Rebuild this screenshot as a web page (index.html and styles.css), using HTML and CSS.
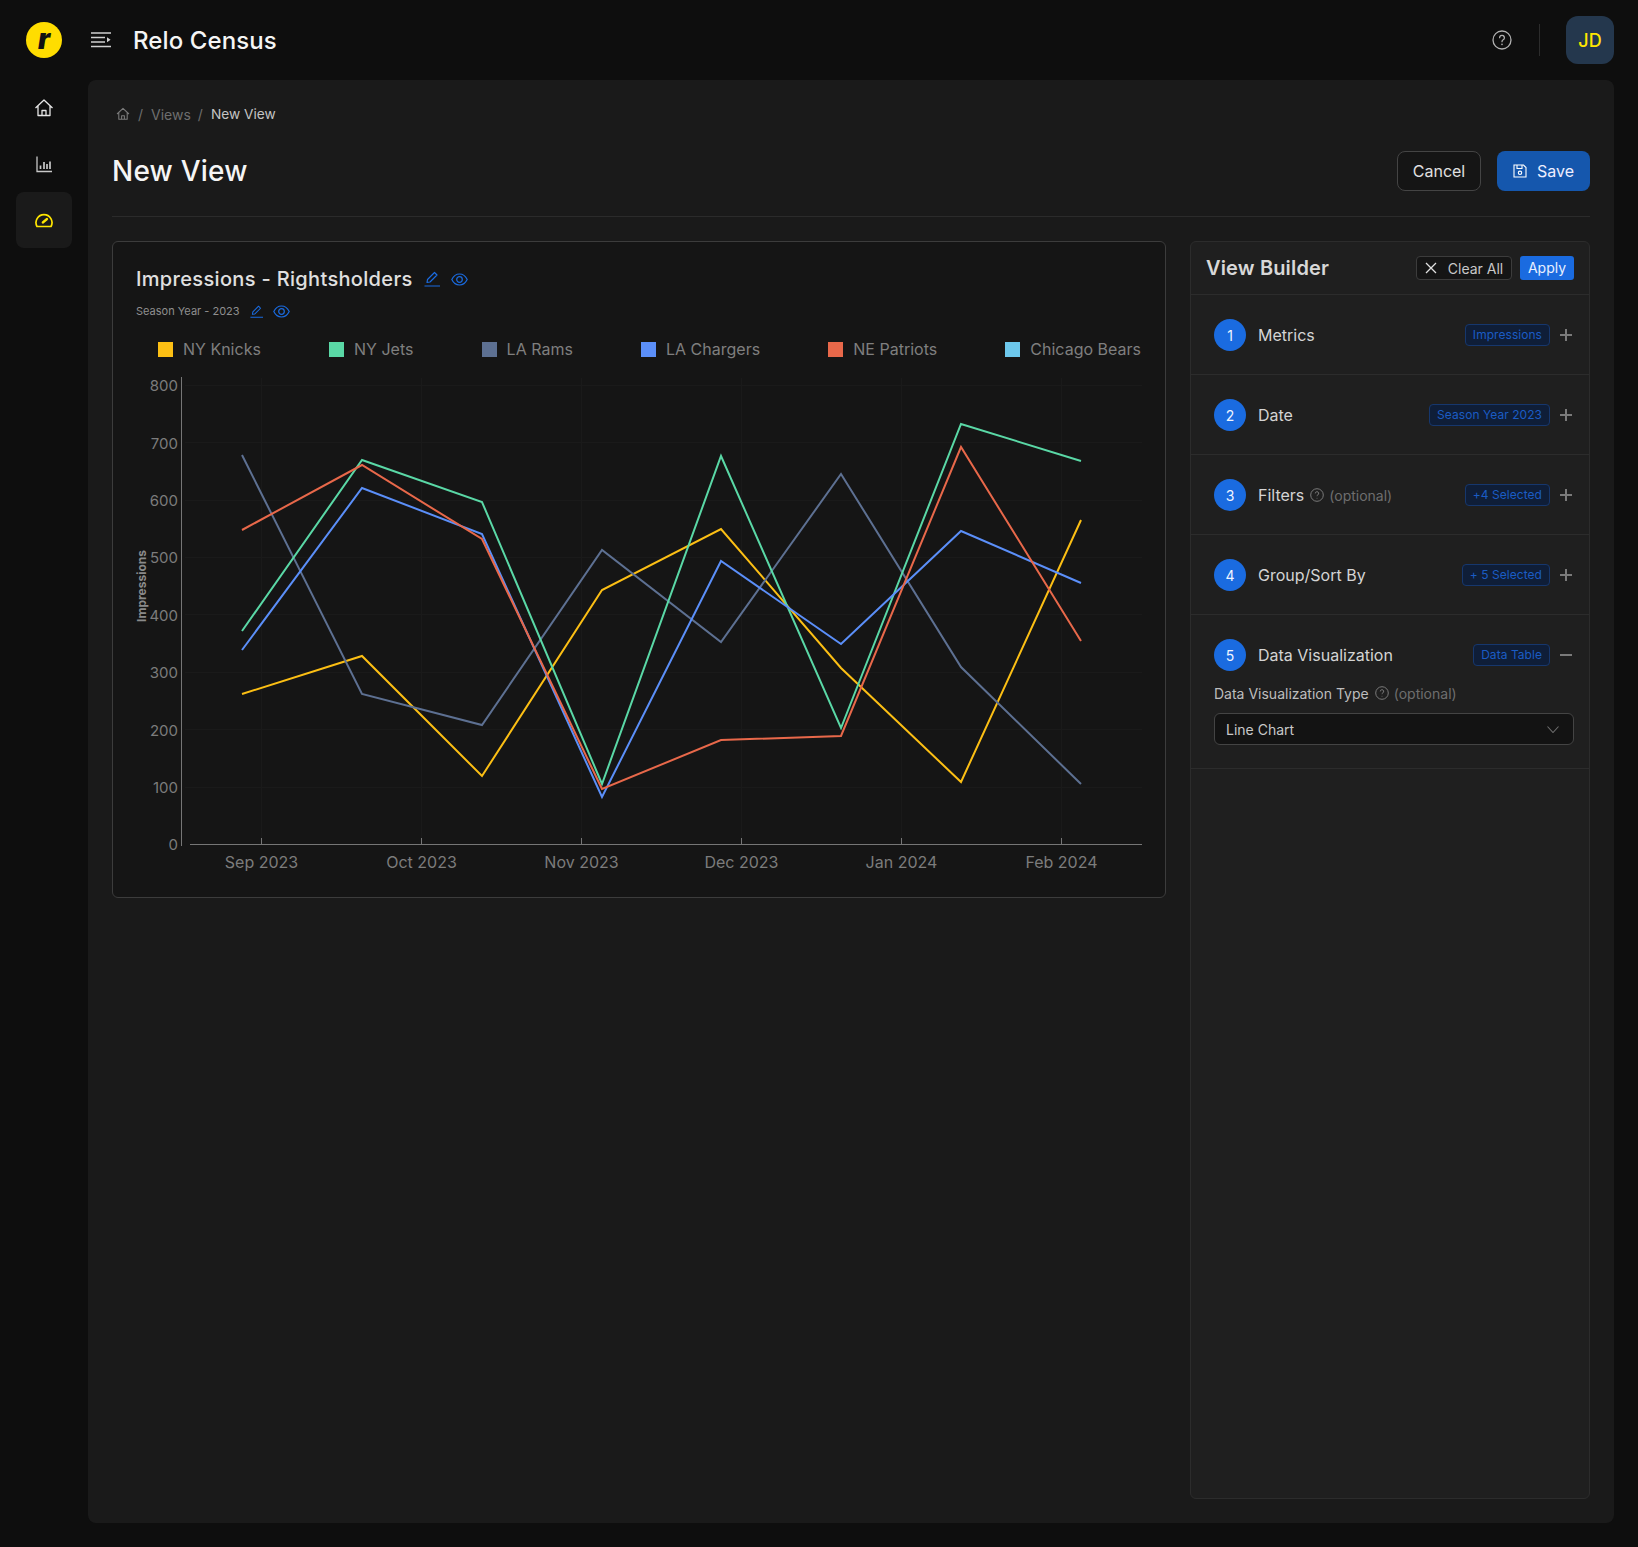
FILE: index.html
```html
<!DOCTYPE html>
<html lang="en">

<head>
  <meta charset="UTF-8" />
  <title>Relo Census – New View</title>
  <link rel="stylesheet" href="styles.css">
</head>

<body>
  <div class="app">

    <header class="topbar">
      <div class="logo-cell"><div class="logo">r</div></div>
      <svg class="menu-icon" width="20" height="16" viewBox="0 0 20 16" fill="none" stroke="#d0d0d0" stroke-width="1.5">
        <path d="M0 1h20M0 5.500h14M0 10h14M0 14.500h20" />
        <path d="M16 5.200l3.600 2.500-3.600 2.500z" fill="#d0d0d0" stroke="none" />
      </svg>
      <div class="app-name">Relo Census</div>
      <div class="topbar-right">
        <svg width="20" height="20" viewBox="0 0 20 20" fill="none" stroke="#b0b0b0" stroke-width="1.3" stroke-linecap="round">
          <circle cx="10" cy="10" r="9" />
          <path d="M7.600 7.700a2.400 2.400 0 1 1 3.600 2.100c-.8.500-1.200 1-1.200 1.900" />
          <path d="M10 14.400v.1" stroke-width="1.6" />
        </svg>
        <div class="topbar-sep"></div>
        <div class="avatar">JD</div>
      </div>
    </header>

    <aside class="sidebar">
      <div class="side-item">
        <svg width="20" height="20" viewBox="0 0 20 20" fill="none" stroke="#e6e6e6" stroke-width="1.3" stroke-linejoin="round">
          <path d="M1.500 10L10 2l8.500 8M4 8v9.500h12V8M8 17.500v-5h4v5" />
        </svg>
      </div>
      <div class="side-item">
        <svg width="20" height="20" viewBox="0 0 20 20" fill="none" stroke="#c8c8c8" stroke-width="1.3">
          <path d="M3 2.500V17.500H18" />
          <path d="M6.500 15v-3.500M10 15V8M13 15v-5M16 15V7.500" stroke-width="1.7" />
        </svg>
      </div>
      <div class="side-item active">
        <svg width="20" height="18" viewBox="0 0 20 18" fill="none" stroke="#ffe600" stroke-width="1.7" stroke-linecap="round" stroke-linejoin="round">
          <path d="M3 15.500A8 8 0 1 1 17 15.500z" />
          <path d="M8.800 11.500l4.200-3.500" stroke-width="2.300" />
        </svg>
      </div>
    </aside>

    <main class="main">
      <div class="breadcrumb">
        <svg width="14" height="14" viewBox="0 0 20 20" fill="none" stroke="#7a7a7a" stroke-width="1.5" stroke-linejoin="round">
          <path d="M1.500 10L10 2l8.500 8M4 8v9.500h12V8M8 17.500v-5h4v5" />
        </svg>
        <span class="crumb-sep">/</span>
        <span class="crumb-link">Views</span>
        <span class="crumb-sep">/</span>
        <span class="crumb-current">New View</span>
      </div>

      <div class="page-head">
        <h1>New View</h1>
        <div class="page-actions">
          <button class="btn btn-cancel">Cancel</button>
          <button class="btn btn-save">
            <svg width="14" height="14" viewBox="0 0 14 14" fill="none" stroke="#fff" stroke-width="1.1">
              <path d="M1 1h9.500L13 3.500V13H1z" />
              <path d="M4 1v3.500h5V1" />
              <circle cx="7" cy="8.800" r="1.700" />
            </svg>
            Save
          </button>
        </div>
      </div>

      <div class="content">
        <section class="chart-card">
          <div class="chart-title">
            <span>Impressions - Rightsholders</span>
            <svg class="pen" width="16" height="16" viewBox="0 0 16 16" fill="none" stroke="#1a6be0" stroke-width="1.2" stroke-linejoin="round">
              <path d="M3 11.500l.5-3L10.500 1.500l2.500 2.500-7 7zM0.500 15h15.500" />
            </svg>
            <svg width="17" height="13" viewBox="0 0 17 13" fill="none" stroke="#1a6be0" stroke-width="1.2">
              <path d="M.8 6.500C2.500 3 5 1 8.500 1s6 2 7.700 5.500C14.500 10 12 12 8.500 12S2.500 10 .8 6.500z" />
              <circle cx="8.500" cy="6.500" r="2.800" />
            </svg>
          </div>
          <div class="chart-sub">
            <span>Season Year - 2023</span>
            <svg width="13" height="13" viewBox="0 0 16 16" fill="none" stroke="#1a6be0" stroke-width="1.3" stroke-linejoin="round">
              <path d="M3 11.500l.5-3L10.500 1.500l2.500 2.500-7 7zM0.500 15h15.500" />
            </svg>
            <svg width="17" height="13" viewBox="0 0 17 13" fill="none" stroke="#1a6be0" stroke-width="1.2">
              <path d="M.8 6.500C2.500 3 5 1 8.500 1s6 2 7.700 5.500C14.500 10 12 12 8.500 12S2.500 10 .8 6.500z" />
              <circle cx="8.500" cy="6.500" r="2.800" />
            </svg>
          </div>

          <div class="legend">
            <div class="legend-item"><i class="swatch sw-knicks"></i>NY Knicks</div>
            <div class="legend-item"><i class="swatch sw-jets"></i>NY Jets</div>
            <div class="legend-item"><i class="swatch sw-rams"></i>LA Rams</div>
            <div class="legend-item"><i class="swatch sw-chargers"></i>LA Chargers</div>
            <div class="legend-item"><i class="swatch sw-patriots"></i>NE Patriots</div>
            <div class="legend-item"><i class="swatch sw-bears"></i>Chicago Bears</div>
          </div>

          <svg class="chart" width="1052" height="520" viewBox="113 372 1052 520">
            <g class="grid">
              <path d="M185 385.500H1142M185 442.500H1142M185 500.500H1142M185 557.500H1142M185 614.500H1142M185 672.500H1142M185 729.500H1142M185 787.500H1142" />
              <path d="M261.500 378V844M421.500 378V844M581.500 378V844M741.500 378V844M901.500 378V844M1061.500 378V844" />
            </g>
            <path class="axis" d="M181.500 377V846M190 844.500H1142" />
            <path class="axis" d="M261.500 838V844M421.500 838V844M581.500 838V844M741.500 838V844M901.500 838V844M1061.500 838V844" />

            <g class="y-labels">
              <text x="178" y="391">800</text>
              <text x="178" y="449">700</text>
              <text x="178" y="506">600</text>
              <text x="178" y="563">500</text>
              <text x="178" y="621">400</text>
              <text x="178" y="678">300</text>
              <text x="178" y="736">200</text>
              <text x="178" y="793">100</text>
              <text x="178" y="850">0</text>
            </g>
            <text class="y-title" transform="translate(146 586) rotate(-90)">Impressions</text>
            <g class="x-labels">
              <text x="261.500" y="868">Sep 2023</text>
              <text x="421.500" y="868">Oct 2023</text>
              <text x="581.500" y="868">Nov 2023</text>
              <text x="741.500" y="868">Dec 2023</text>
              <text x="901.500" y="868">Jan 2024</text>
              <text x="1061.500" y="868">Feb 2024</text>
            </g>

            <polyline class="line ln-knicks" points="242,694 362,656 482,776 602,590 721,529 841,668 961,782 1081,520" />
            <polyline class="line ln-rams" points="242,455 362,694 482,725 602,550 721,642 841,474 961,667 1081,784" />
            <polyline class="line ln-jets" points="242,631 362,460 482,502 602,784 721,456 841,728 961,424 1081,461" />
            <polyline class="line ln-chargers" points="242,650 362,488 482,534 602,797 721,561 841,644 961,531 1081,583" />
            <polyline class="line ln-patriots" points="242,530 362,465 482,539 602,789 721,740 841,736 961,447 1081,641" />
          </svg>
        </section>

        <aside class="builder">
          <div class="builder-head">
            <h2>View Builder</h2>
            <button class="btn-clear">
              <svg width="12" height="12" viewBox="0 0 12 12" fill="none" stroke="#e0e0e0" stroke-width="1.3"><path d="M1 1l10 10M11 1L1 11" /></svg>
              Clear All
            </button>
            <button class="btn-apply">Apply</button>
          </div>

          <div class="step">
            <div class="step-line">
              <span class="step-num">1</span>
              <span class="step-name">Metrics</span>
              <span class="tag">Impressions</span>
              <span class="toggle toggle-plus"></span>
            </div>
          </div>
          <div class="step">
            <div class="step-line">
              <span class="step-num">2</span>
              <span class="step-name">Date</span>
              <span class="tag">Season Year 2023</span>
              <span class="toggle toggle-plus"></span>
            </div>
          </div>
          <div class="step">
            <div class="step-line">
              <span class="step-num">3</span>
              <span class="step-name">Filters</span>
              <svg class="hint" width="14" height="14" viewBox="0 0 14 14" fill="none" stroke="#7a7a7a" stroke-width="1">
                <circle cx="7" cy="7" r="6.300" />
                <path d="M5.300 5.400a1.700 1.700 0 1 1 2.500 1.500c-.5.300-.8.700-.8 1.300M7 9.900v.6" />
              </svg>
              <span class="optional">(optional)</span>
              <span class="tag">+4 Selected</span>
              <span class="toggle toggle-plus"></span>
            </div>
          </div>
          <div class="step">
            <div class="step-line">
              <span class="step-num">4</span>
              <span class="step-name">Group/Sort By</span>
              <span class="tag">+ 5 Selected</span>
              <span class="toggle toggle-plus"></span>
            </div>
          </div>
          <div class="step step-open">
            <div class="step-line">
              <span class="step-num">5</span>
              <span class="step-name">Data Visualization</span>
              <span class="tag">Data Table</span>
              <span class="toggle"></span>
            </div>
            <div class="field-label">
              <span>Data Visualization Type</span>
              <svg class="hint" width="14" height="14" viewBox="0 0 14 14" fill="none" stroke="#7a7a7a" stroke-width="1">
                <circle cx="7" cy="7" r="6.300" />
                <path d="M5.300 5.400a1.700 1.700 0 1 1 2.500 1.500c-.5.300-.8.700-.8 1.300M7 9.900v.6" />
              </svg>
              <span class="optional">(optional)</span>
            </div>
            <div class="select">
              <span>Line Chart</span>
              <svg width="12" height="7" viewBox="0 0 12 7" fill="none" stroke="#6e6e6e" stroke-width="1.1"><path d="M.5.500L6 6.500 11.500.5" /></svg>
            </div>
          </div>
        </aside>
      </div>
    </main>

  </div>
</body>

</html>
```
FILE: styles.css
```css
* {
  box-sizing: border-box;
}

body {
  margin: 0;
  background: #0e0e0e;
  color: #e6e6e6;
  font-family: Inter, "Liberation Sans", sans-serif;
}

.app {
  display: grid;
  grid-template-columns: 88px 1fr;
  grid-template-rows: 80px 1fr;
  height: 100vh;
  padding: 0 24px 24px 0;
}

/* top bar */
.topbar {
  grid-column: 1 / 3;
  display: flex;
  align-items: center;
}

.logo-cell {
  width: 88px;
  display: flex;
  justify-content: center;
}

.logo {
  width: 36px;
  height: 36px;
  border-radius: 50%;
  background: #ffdd00;
  color: #111;
  font-size: 28px;
  font-weight: 900;
  font-style: italic;
  line-height: 34px;
  text-align: center;
}

.menu-icon {
  margin-left: 3px;
}

.app-name {
  margin-left: 22px;
  font-size: 24px;
  font-weight: 500;
  letter-spacing: 0.1px;
  color: #f5f5f5;
}

.topbar-right {
  margin-left: auto;
  display: flex;
  align-items: center;
}

.topbar-sep {
  width: 1px;
  height: 32px;
  margin: 0 26px 0 27px;
  background: #2c2c2c;
}

.avatar {
  width: 48px;
  height: 48px;
  border-radius: 12px;
  background: #24374d;
  color: #ffe600;
  font-size: 18px;
  font-weight: 500;
  display: flex;
  align-items: center;
  justify-content: center;
}

/* side nav */
.sidebar {
  display: flex;
  flex-direction: column;
  align-items: center;
}

.side-item {
  width: 56px;
  height: 56px;
  border-radius: 8px;
  display: flex;
  align-items: center;
  justify-content: center;
}

.side-item.active {
  background: #1a1a1a;
}

/* main panel */
.main {
  display: flex;
  flex-direction: column;
  min-height: 0;
  padding: 24px 24px 24px;
  background: #1a1a1a;
  border-radius: 8px;
}

.breadcrumb {
  display: flex;
  align-items: center;
  height: 20px;
  padding-left: 4px;
  font-size: 14px;
  color: #6e6e6e;
}

.crumb-sep {
  margin: 0 8px 0 8px;
}

.crumb-link {
  margin-right: -1px;
}

.crumb-current {
  font-size: 13.700px;
  color: #c4c4c4;
}

.page-head {
  display: flex;
  align-items: center;
  justify-content: space-between;
  margin-top: 27px;
  padding-bottom: 25px;
  border-bottom: 1px solid #2b2b2b;
}

h1 {
  margin: 0;
  font-size: 28px;
  font-weight: 500;
  letter-spacing: 0.2px;
  color: #f5f5f5;
}

.page-actions {
  display: flex;
  gap: 16px;
}

.btn {
  height: 40px;
  border-radius: 8px;
  font-family: inherit;
  font-size: 16px;
  color: #e0e0e0;
}

.btn-cancel {
  width: 84px;
  background: #151515;
  border: 1px solid #444;
}

.btn-save {
  width: 93px;
  display: flex;
  align-items: center;
  justify-content: center;
  gap: 10px;
  background: #1557ad;
  border: none;
  color: #eef;
}

.content {
  flex: 1;
  display: flex;
  align-items: flex-start;
  gap: 24px;
  margin-top: 24px;
  min-height: 0;
}

/* chart card */
.chart-card {
  width: 1054px;
  height: 657px;
  padding: 23px 0 0;
  background: #151515;
  border: 1px solid #3c3c3c;
  border-radius: 6px;
}

.chart-title {
  display: flex;
  align-items: center;
  gap: 11px;
  padding-left: 23px;
  font-size: 20px;
  font-weight: 500;
  letter-spacing: 0.33px;
  line-height: 28px;
  color: #e0e0e0;
}

.chart-sub {
  display: flex;
  align-items: center;
  gap: 10px;
  margin-top: 10px;
  padding-left: 23px;
  font-size: 11px;
  line-height: 16px;
  color: #8f8f8f;
}

.legend {
  display: flex;
  justify-content: space-between;
  margin-top: 20px;
  padding: 0 24px 0 45px;
  font-size: 16px;
  color: #7f7f7f;
}

.legend-item {
  display: flex;
  align-items: center;
  gap: 10px;
  line-height: 20px;
}

.swatch {
  width: 15px;
  height: 15px;
}

.sw-knicks { background: #fcbf14; }
.sw-jets { background: #5ad8a6; }
.sw-rams { background: #5d7092; }
.sw-chargers { background: #5b8ff9; }
.sw-patriots { background: #e8684a; }
.sw-bears { background: #6dc8ec; }

.chart {
  display: block;
  margin-top: 13px;
}

.grid path {
  stroke: #1a1a1a;
  fill: none;
}

.axis {
  stroke: #767676;
  fill: none;
}

.y-labels text {
  text-anchor: end;
  font-size: 15px;
  fill: #7c7c7c;
}

.x-labels text {
  text-anchor: middle;
  font-size: 16px;
  fill: #7c7c7c;
}

.y-title {
  text-anchor: middle;
  font-size: 12px;
  font-weight: 700;
  fill: #8a8a8a;
}

.line {
  fill: none;
  stroke-width: 2;
}

.ln-knicks { stroke: #fcbf14; }
.ln-jets { stroke: #5ad8a6; }
.ln-rams { stroke: #5d7092; }
.ln-chargers { stroke: #5b8ff9; }
.ln-patriots { stroke: #e8684a; }

/* view builder */
.builder {
  width: 400px;
  align-self: stretch;
  background: #1f1f1f;
  border: 1px solid #2c2c2c;
  border-radius: 6px;
}

.builder-head {
  display: flex;
  align-items: center;
  height: 53px;
  padding: 0 15px;
  border-bottom: 1px solid #2c2c2c;
}

h2 {
  margin: 0 auto 0 0;
  font-size: 20px;
  font-weight: 600;
  letter-spacing: 0.15px;
  color: #d8d8d8;
}

.btn-clear {
  width: 96px;
  height: 24px;
  display: flex;
  align-items: center;
  justify-content: center;
  gap: 11px;
  padding-bottom: 1px;
  background: #151515;
  border: 1px solid #3c3c3c;
  border-radius: 4px;
  font-family: inherit;
  font-size: 14px;
  color: #c8c8c8;
}

.btn-apply {
  width: 54px;
  height: 24px;
  margin-left: 8px;
  padding: 0 0 1px;
  background: #1a6be0;
  border: none;
  border-radius: 3px;
  font-family: inherit;
  font-size: 14px;
  color: #e8f0ff;
}

.step {
  height: 80px;
  padding: 24px 15px 0 23px;
  border-bottom: 1px solid #2c2c2c;
}

.step-open {
  height: 154px;
}

.step-line {
  display: flex;
  align-items: center;
  height: 32px;
}

.step-num {
  width: 32px;
  height: 32px;
  border-radius: 50%;
  background: #1a6be0;
  color: #f0f5ff;
  font-size: 14px;
  display: flex;
  align-items: center;
  justify-content: center;
}

.step-name {
  margin-left: 12px;
  font-size: 16px;
  color: #d4d4d4;
}

.hint {
  margin: 0 5px 0 6px;
}

.optional {
  font-size: 14px;
  color: #6e6e6e;
}

.tag {
  margin-left: auto;
  height: 22px;
  padding: 0 7px;
  line-height: 19px;
  background: #0f1e38;
  border: 1px solid #16376d;
  border-radius: 4px;
  font-size: 12px;
  letter-spacing: 0.05px;
  color: #1b5cc4;
}

.toggle {
  position: relative;
  width: 12px;
  height: 12px;
  margin: 0 2px 0 10px;
}

.toggle::before {
  content: "";
  position: absolute;
  top: 5px;
  left: 0;
  width: 12px;
  height: 2px;
  background: #7a7a7a;
}

.toggle-plus::after {
  content: "";
  position: absolute;
  top: 0;
  left: 5px;
  width: 2px;
  height: 12px;
  background: #7a7a7a;
}

.field-label {
  display: flex;
  align-items: center;
  margin-top: 12px;
  height: 20px;
  font-size: 14px;
  color: #bdbdbd;
}

.select {
  display: flex;
  align-items: center;
  justify-content: space-between;
  height: 32px;
  margin-top: 10px;
  padding: 0 14px 0 11px;
  background: #131313;
  border: 1px solid #444;
  border-radius: 6px;
  font-size: 14px;
  color: #c8c8c8;
}
```
